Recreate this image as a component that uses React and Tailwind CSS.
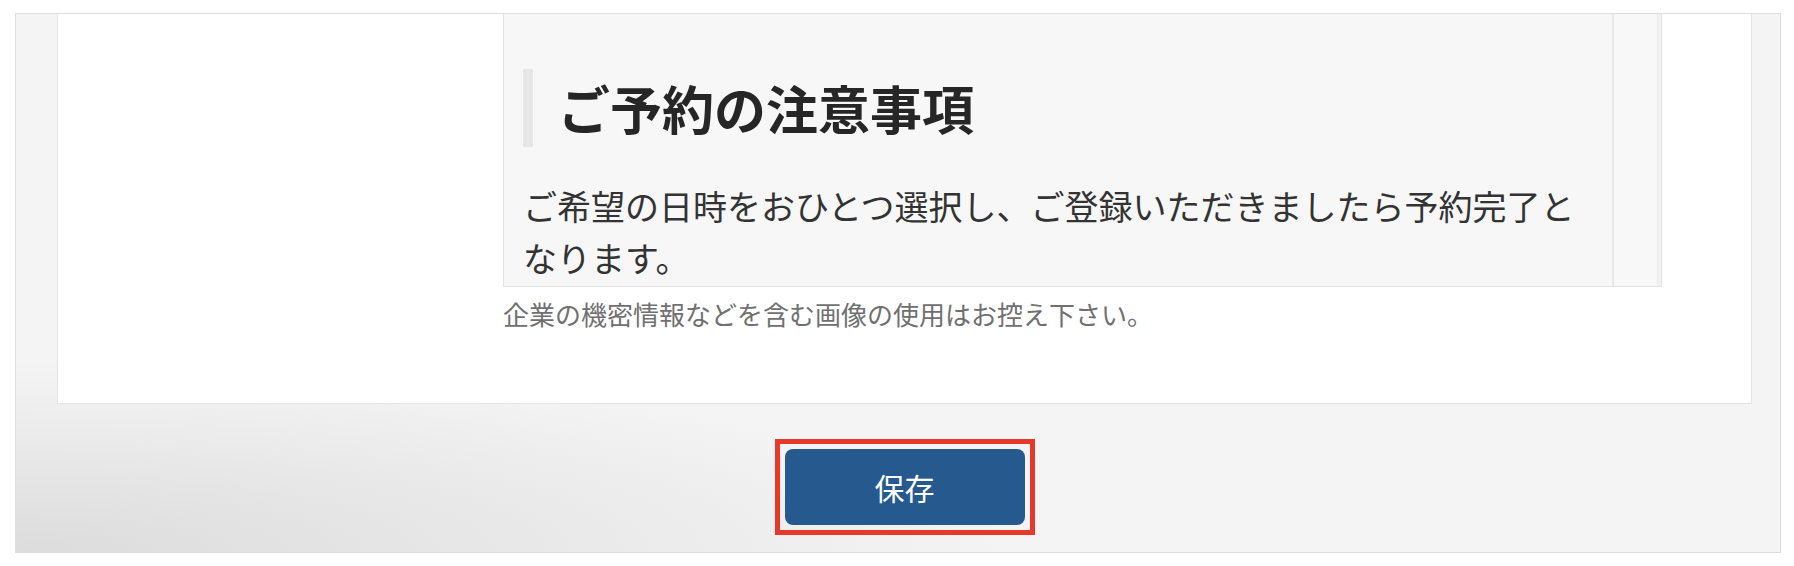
export default function App() {
  return (
    <div className="min-h-screen bg-white pt-[13px] pl-[15px] font-['Noto_Sans_CJK_JP','Noto_Sans',sans-serif]">
      {/* OUTER FRAME */}
      <div className="w-[1766px] h-[540px] border border-[#dddddd] bg-[#f4f4f4] bg-[radial-gradient(ellipse_1000px_190px_at_0%_100%,#dcdcdc,#f4f4f4)] pl-[41px] pr-[28px]">
        {/* WHITE CARD */}
        <div className="h-[390px] bg-white border-l border-r border-b border-[#e5e5e5] pl-[445px] pr-[89px]">
          {/* PREVIEW BOX */}
          <div className="flex h-[273px] bg-[#f7f7f7] border-l border-r border-b border-[#e3e3e3]">
            <div className="flex-1 overflow-hidden pl-[19px] pr-[20px] pt-[55px]">
              <h2 className="border-l-[10px] border-[#e6e6e6] pl-[25px] text-[52px] leading-[78px] font-bold text-[#262626]">
                ご予約の注意事項
              </h2>
              <p className="mt-[33px] text-[34px] leading-[52px] text-[#333333]">
                ご希望の日時をおひとつ選択し、ご登録いただきましたら予約完了となります。
              </p>
            </div>
            {/* SCROLL TRACK */}
            <div className="w-[45px] border-l-2 border-[#e8e8e8] bg-[#f8f8f8]" />
            <div className="w-[4px] border-l border-[#e9e9e9] bg-[#f2f2f2]" />
          </div>

          <p className="mt-[8px] text-[26px] leading-[37px] text-[#707070]">
            企業の機密情報などを含む画像の使用はお控え下さい。
          </p>
        </div>

        {/* SAVE BUTTON */}
        <div className="flex justify-center pt-[35px]">
          <div className="border-[5px] border-[#e6392c] p-[5px]">
            <button className="w-[240px] h-[76px] rounded-[8px] bg-[#265a8f] text-white text-[30px] leading-none">
              保存
            </button>
          </div>
        </div>
      </div>
    </div>
  );
}
